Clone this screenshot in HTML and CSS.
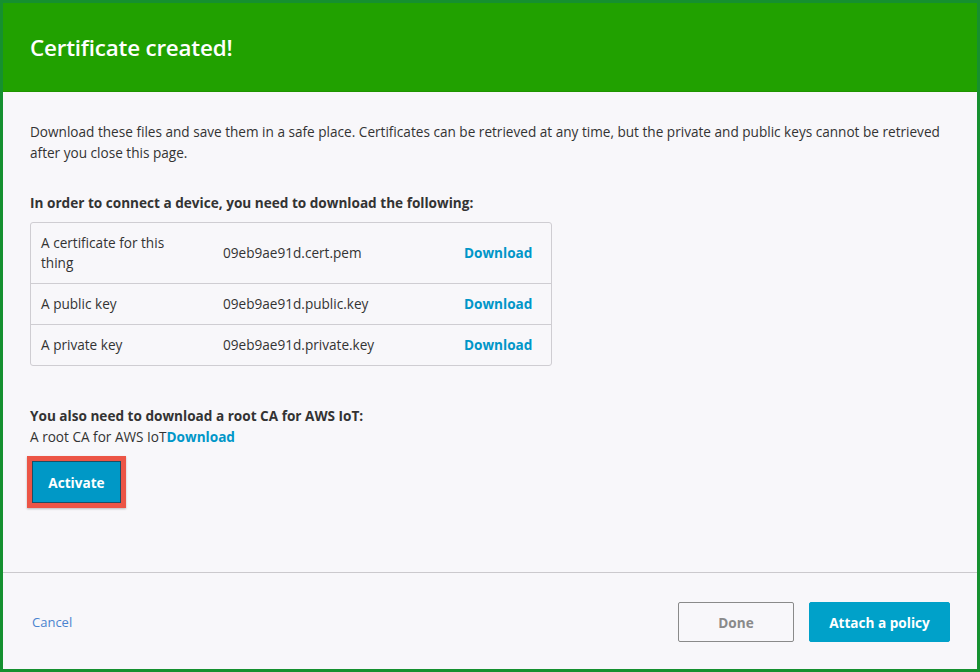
FILE: index.html
```html
<!DOCTYPE html>
<html>
<head>
<meta charset="utf-8">
<link rel="stylesheet" href="styles.css">
</head>
<body>
<div class="frame">
  <header class="head">
    <h1 class="title">Certificate created!</h1>
  </header>
  <main class="content">
    <p class="intro">Download these files and save them in a safe place. Certificates can be retrieved at any time, but the private and public keys cannot be retrieved after you close this page.</p>
    <h2 class="subhead">In order to connect a device, you need to download the following:</h2>
    <div class="files">
      <div class="row">
        <div class="c1">A certificate for this thing</div>
        <div class="c2">09eb9ae91d.cert.pem</div>
        <div class="c3"><a class="link">Download</a></div>
      </div>
      <div class="row">
        <div class="c1">A public key</div>
        <div class="c2">09eb9ae91d.public.key</div>
        <div class="c3"><a class="link">Download</a></div>
      </div>
      <div class="row">
        <div class="c1">A private key</div>
        <div class="c2">09eb9ae91d.private.key</div>
        <div class="c3"><a class="link">Download</a></div>
      </div>
    </div>
    <h2 class="subhead root-head">You also need to download a root CA for AWS IoT:</h2>
    <div class="root-line">A root CA for AWS IoT<a class="link">Download</a></div>
    <div class="highlight"><button class="btn-activate">Activate</button></div>
  </main>
  <footer class="foot">
    <a class="cancel">Cancel</a>
    <div class="actions">
      <button class="btn-done">Done</button>
      <button class="btn-primary">Attach a policy</button>
    </div>
  </footer>
</div>
</body>
</html>
```
FILE: styles.css
```css
* { box-sizing: border-box; }
html, body { margin: 0; padding: 0; }
body {
  font-family: "Open Sans", "Noto Sans", "Liberation Sans", sans-serif;
  color: #333;
  background: #f8f7fa;
}
.frame {
  width: 980px;
  height: 672px;
  border: 3px solid #15902f;
  display: flex;
  flex-direction: column;
  background: #f8f7fa;
}
.head {
  height: 89px;
  background: #21a100;
  display: flex;
  align-items: center;
  padding: 0 27px;
  border-bottom: 1px solid #1f9400;
}
.title {
  margin: 0;
  color: #fff;
  font-size: 22.4px;
  font-weight: 600;
  letter-spacing: -0.2px;
}
.content {
  flex: 1;
  padding: 29px 27px 0;
  font-size: 13.6px;
  line-height: 21px;
}
.intro { margin: 0; }
.subhead {
  margin: 29px 0 9px;
  font-size: 13.6px;
  font-weight: 700;
  line-height: 21px;
}
.files {
  width: 522px;
  border: 1px solid #cfcdd2;
  border-radius: 3px;
}
.row {
  display: flex;
  align-items: center;
  padding: 10px 0;
  line-height: 20px;
  border-top: 1px solid #cfcdd2;
}
.row:first-child { border-top: 0; }
.c1 { width: 192px; padding-left: 10px; padding-right: 46px; }
.c2 { width: 241px; }
.c3 { flex: 1; }
.link {
  color: #0096c8;
  font-weight: 700;
  cursor: pointer;
}
.root-head { margin: 39px 0 0; }
.highlight {
  display: inline-block;
  margin-top: 9px;
  margin-left: -3px;
  border: 5px solid #ec5546;
  box-shadow: 0 1px 2px rgba(0,0,0,0.25);
}
.btn-activate {
  display: block;
  width: 89px;
  height: 42px;
  background: #0098c6;
  border: 1px solid #1b4f66;
  color: #fff;
  font-family: inherit;
  font-size: 13.6px;
  font-weight: 700;
}
.foot {
  height: 97px;
  border-top: 1px solid #cbc9cd;
  display: flex;
  align-items: center;
  justify-content: space-between;
  padding: 2px 27px 0 29px;
}
.cancel {
  color: #4a83cf;
  font-size: 13px;
}
.actions { display: flex; gap: 15px; }
.btn-done, .btn-primary {
  height: 40px;
  font-family: inherit;
  font-size: 13.6px;
  font-weight: 700;
  border-radius: 2px;
}
.btn-done {
  width: 116px;
  background: #f8f7fa;
  border: 1px solid #8a8a8a;
  color: #8a8a8a;
}
.btn-primary {
  width: 141px;
  background: #00a1c9;
  border: 1px solid #00a1c9;
  color: #fff;
}
```
